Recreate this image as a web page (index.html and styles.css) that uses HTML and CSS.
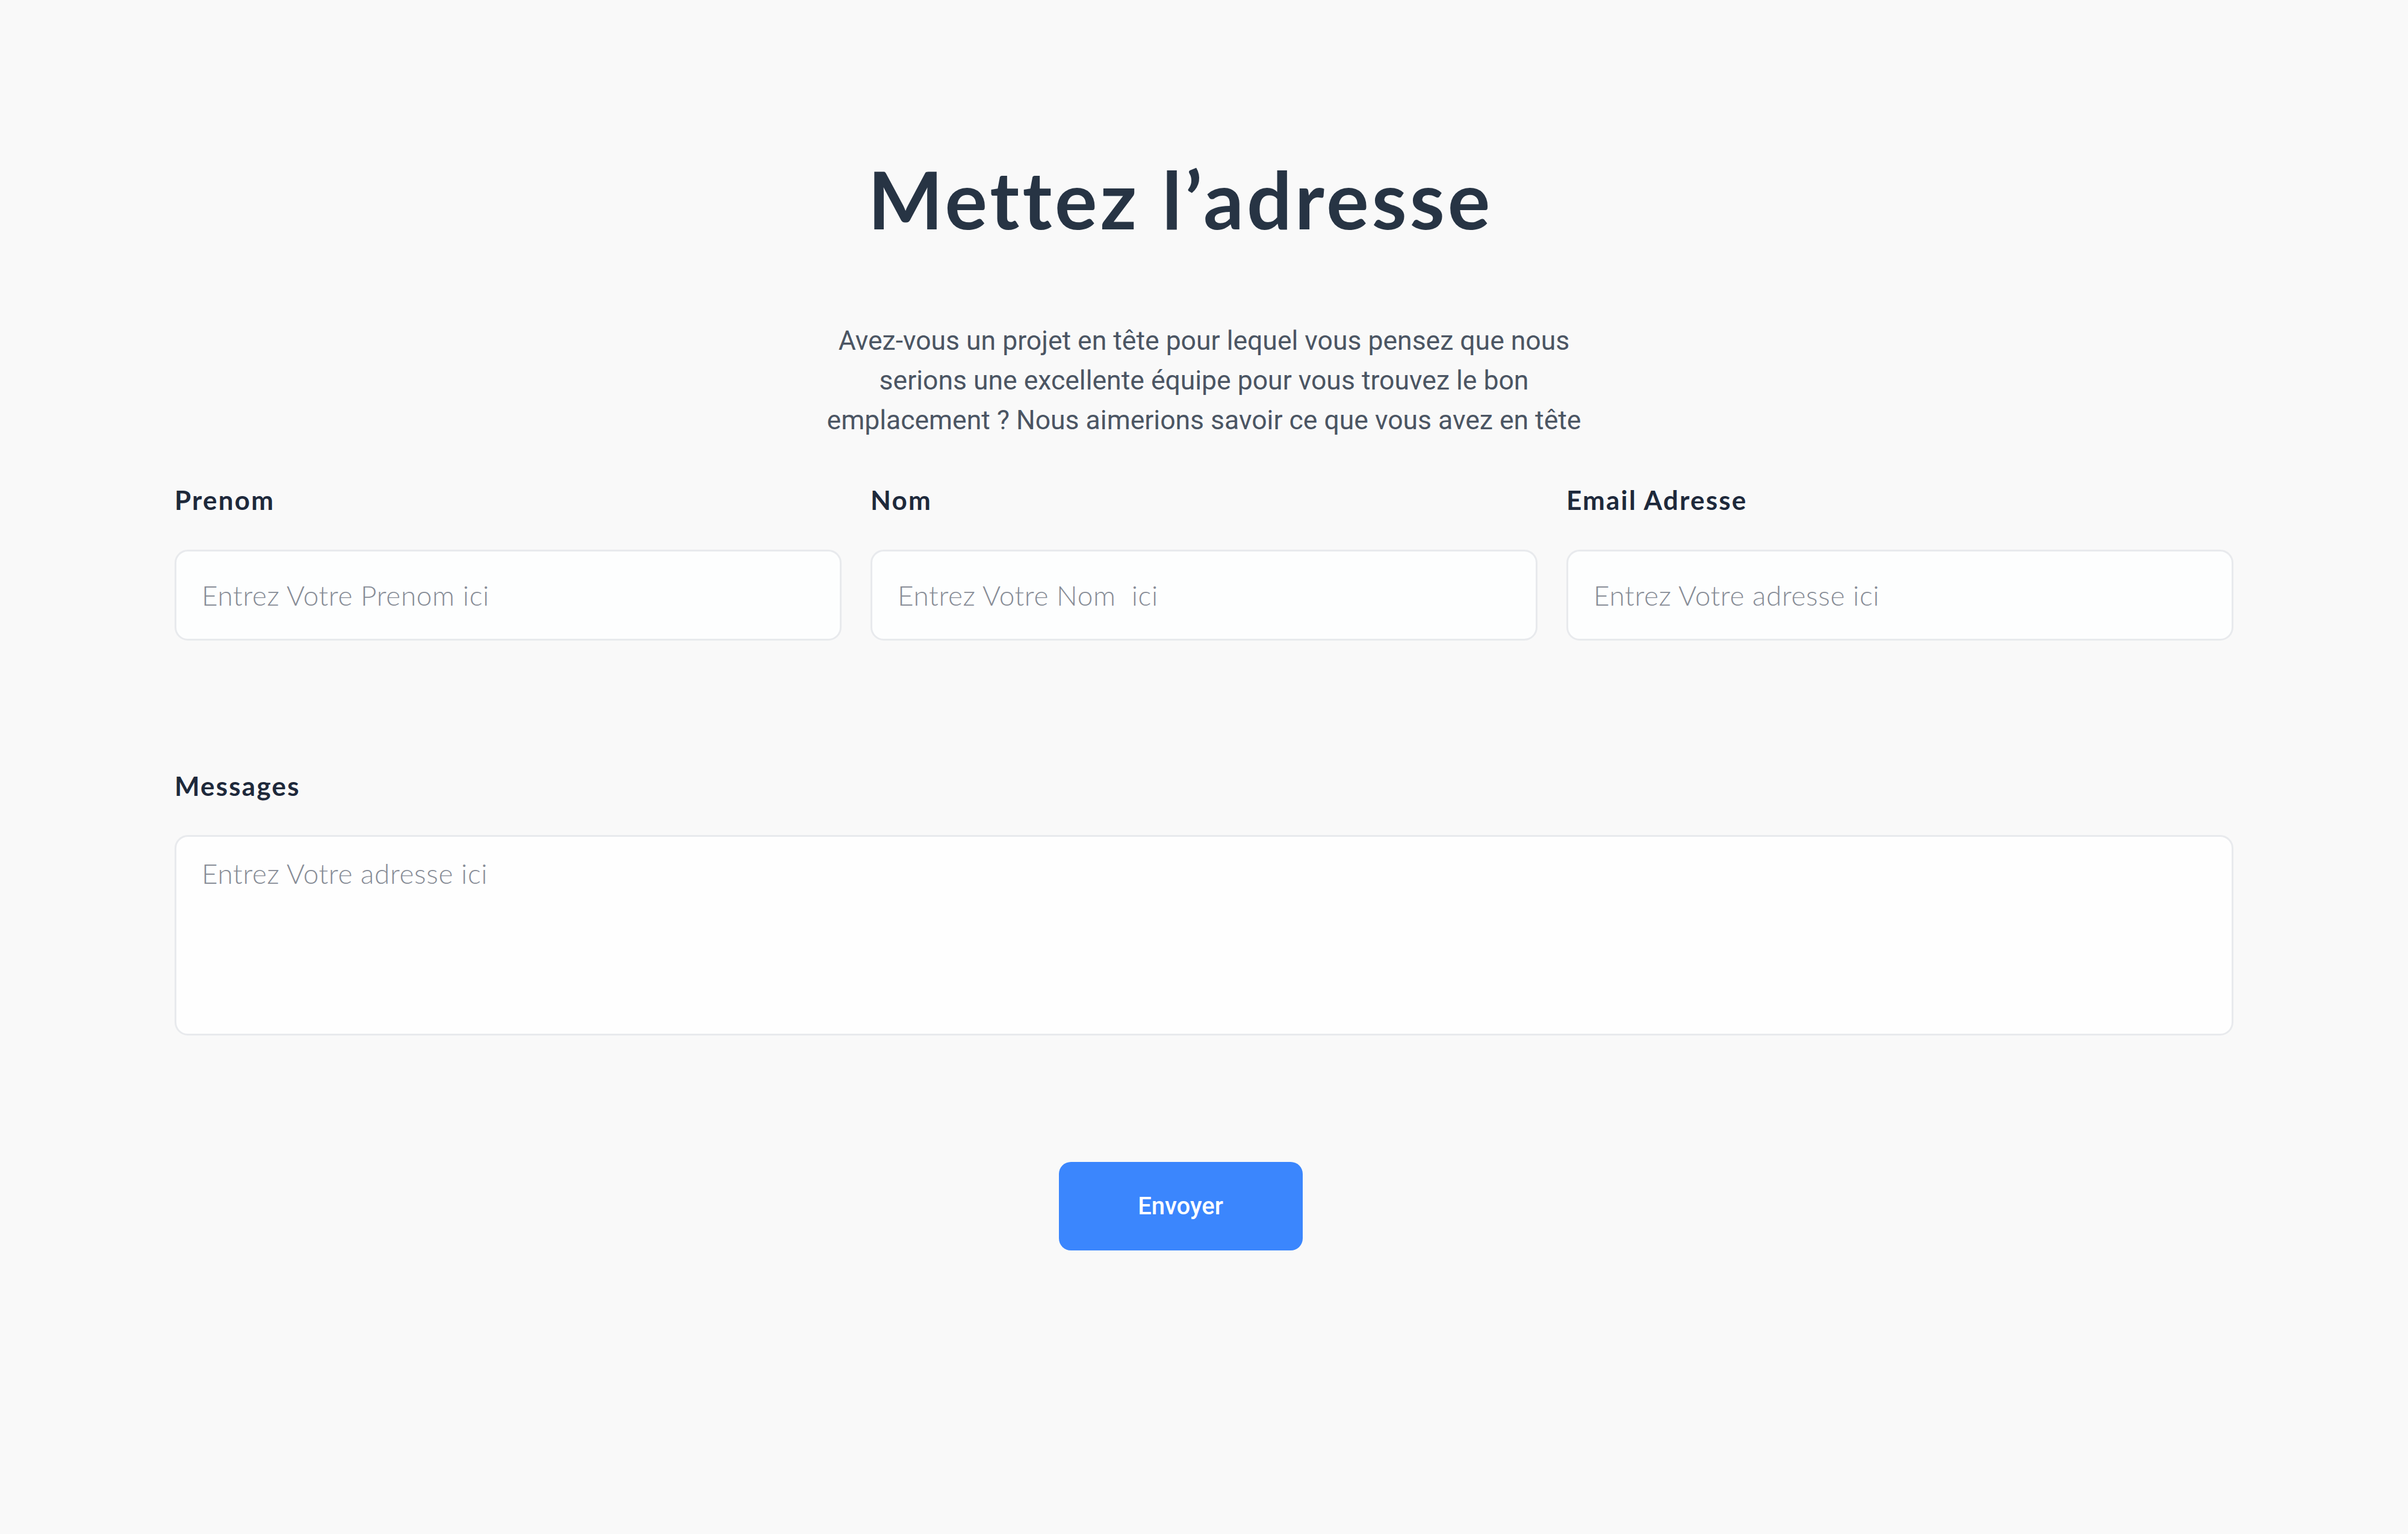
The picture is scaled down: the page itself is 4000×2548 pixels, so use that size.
FILE: index.html
```html
<!DOCTYPE html>
<html lang="fr">
<head>
<meta charset="utf-8">
<title>Mettez l’adresse</title>
<link rel="stylesheet" href="styles.css">
</head>
<body>
<main class="page">
  <header class="intro">
    <h1 class="title">Mettez l’adresse</h1>
    <p class="lead">Avez-vous un projet en tête pour lequel vous pensez que nous serions une excellente équipe pour vous trouvez le bon emplacement ? Nous aimerions savoir ce que vous avez en tête</p>
  </header>
  <form class="form">
    <div class="row">
      <div class="field">
        <label class="label" for="prenom">Prenom</label>
        <input class="input" id="prenom" type="text" placeholder="Entrez Votre Prenom ici">
      </div>
      <div class="field">
        <label class="label" for="nom">Nom</label>
        <input class="input" id="nom" type="text" placeholder="Entrez Votre Nom  ici">
      </div>
      <div class="field">
        <label class="label" for="email">Email Adresse</label>
        <input class="input" id="email" type="email" placeholder="Entrez Votre adresse ici">
      </div>
    </div>
    <div class="field field-message">
      <label class="label" for="message">Messages</label>
      <textarea class="input textarea" id="message" placeholder="Entrez Votre adresse ici"></textarea>
    </div>
    <div class="actions">
      <button class="submit" type="button">Envoyer</button>
    </div>
  </form>
</main>
</body>
</html>
```
FILE: styles.css
```css
html, body {
  margin: 0;
  padding: 0;
}
body {
  background: #f9f9f9;
  font-family: "Lato", "Liberation Sans", sans-serif;
  color: #1e293b;
}
.page {
  padding: 264px 290px 300px;
}
.intro {
  display: flex;
  flex-direction: column;
  align-items: center;
}
.title {
  margin: 0 78px 0 0;
  font-family: "Lato", sans-serif;
  font-weight: 700;
  font-size: 132px;
  line-height: 132px;
  letter-spacing: 5px;
  color: #273444;
}
.lead {
  margin: 137px 0 0;
  max-width: 1300px;
  text-align: center;
  font-family: "Roboto", "Liberation Sans", sans-serif;
  font-weight: 400;
  font-size: 44.5px;
  line-height: 66px;
  color: #4b5563;
}
.form {
  margin-top: 66px;
}
.row {
  display: grid;
  grid-template-columns: repeat(3, 1fr);
  column-gap: 48px;
}
.field {
  display: flex;
  flex-direction: column;
}
.label {
  font-family: "Lato", sans-serif;
  font-weight: 700;
  font-size: 44px;
  line-height: 66px;
  letter-spacing: 2.2px;
  color: #1e293b;
  margin-bottom: 50px;
}
.input {
  box-sizing: border-box;
  height: 151px;
  border: 3px solid #e8eaed;
  border-radius: 22px;
  background: #fdfefe;
  padding: 0 42px;
  font-family: "Lato", sans-serif;
  font-weight: 300;
  font-size: 46px;
  letter-spacing: 0.6px;
  color: #374151;
  outline: none;
}
.input::placeholder {
  color: #878c96;
  font-weight: 300;
}
.field-message {
  margin-top: 208px;
}
.field-message .label {
  margin-bottom: 49px;
}
.textarea {
  height: 333px;
  padding: 28px 42px;
  line-height: 66px;
  resize: none;
  background: #fefefe;
}
.actions {
  display: flex;
  justify-content: center;
  margin-top: 210px;
  padding-right: 78px;
}
.submit {
  width: 405px;
  height: 147px;
  border: none;
  border-radius: 20px;
  background: #3b86fd;
  color: #ffffff;
  font-family: "Roboto", sans-serif;
  font-weight: 500;
  font-size: 40px;
  cursor: pointer;
}
```
